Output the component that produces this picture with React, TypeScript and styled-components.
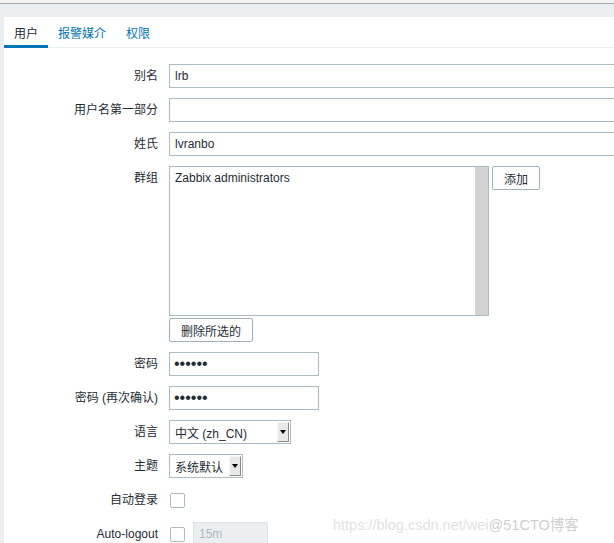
import * as React from 'react';
import styled, { createGlobalStyle } from 'styled-components';

const palette = {
  text: '#1f2c33',
  blue: '#0275b8',
  border: '#acbbc2',
  page: '#ebeef0',
  muted: '#acbbc2',
};

const GlobalStyle = createGlobalStyle`
  html, body {
    margin: 0;
    padding: 0;
    background: ${palette.page};
    overflow: hidden;
  }
  body {
    font-family: "Liberation Sans", Arial, "Noto Sans CJK SC", sans-serif;
    font-size: 12px;
    color: ${palette.text};
  }
`;

const Chrome = styled.div`
  height: 3px;
  background: #f3f3f3;
  border-bottom: 1px solid #a9a9a9;
`;

const Main = styled.div`
  padding: 13px 0 0 4px;
`;

const Panel = styled.div`
  background: #fff;
  height: 526px;
  overflow: hidden;
`;

const TabBar = styled.div`
  display: flex;
  height: 31px;
  border-bottom: 1px solid ${palette.page};
  box-sizing: border-box;
`;

const Tab = styled.div<{ $active?: boolean }>`
  padding: 0 10px;
  display: flex;
  align-items: center;
  height: 31px;
  box-sizing: border-box;
  border-bottom: 3px solid ${(p) => (p.$active ? palette.blue : 'transparent')};
  padding-top: 2px;
  color: ${(p) => (p.$active ? palette.text : palette.blue)};
`;

const Form = styled.div`
  display: grid;
  grid-template-columns: 154px 1fr;
  column-gap: 11px;
  row-gap: 10px;
  padding-top: 16px;
`;

const Label = styled.div`
  text-align: right;
  height: 24px;
  line-height: 24px;
  white-space: nowrap;
`;

const Field = styled.div`
  display: flex;
  align-items: center;
  gap: 8px;
  min-height: 24px;
`;

const FieldStack = styled.div`
  display: flex;
  flex-direction: column;
  align-items: flex-start;
  gap: 2px;
`;

const TextInput = styled.input<{ $width: number }>`
  width: ${(p) => p.$width}px;
  height: 24px;
  box-sizing: border-box;
  border: 1px solid ${palette.border};
  padding: 0 5px;
  font: inherit;
  color: ${palette.text};
  background: #fff;
  outline: none;
  flex-shrink: 0;
  &[type='password'] {
    font-size: 16px;
    padding-left: 4px;
  }
  &:disabled {
    background: ${palette.page};
    border-color: #dde3e6;
    color: ${palette.muted};
  }
`;

const ListRow = styled.div`
  display: flex;
  align-items: flex-start;
  gap: 3px;
`;

const ListBox = styled.div`
  width: 320px;
  height: 150px;
  box-sizing: border-box;
  border: 1px solid ${palette.border};
  display: flex;
`;

const ListItems = styled.div`
  flex: 1;
  padding: 4px 5px;
  line-height: 14px;
`;

const ScrollTrack = styled.div`
  width: 13px;
  background: #d3d3d3;
`;

const Button = styled.button`
  height: 24px;
  box-sizing: border-box;
  padding: 0 11px;
  border: 1px solid #9fb0b8;
  border-radius: 2px;
  background: #fff;
  font: inherit;
  color: ${palette.text};
`;

const Select = styled.div<{ $width: number }>`
  width: ${(p) => p.$width}px;
  height: 24px;
  box-sizing: border-box;
  border: 1px solid ${palette.border};
  display: flex;
  align-items: stretch;
  padding: 1px 1px 1px 5px;
`;

const SelectValue = styled.div`
  flex: 1;
  display: flex;
  align-items: center;
  white-space: nowrap;
`;

const SelectArrow = styled.div`
  width: 10px;
  background: #e8e8e8;
  border-left: 1px solid #f8f8f8;
  border-top: 1px solid #f8f8f8;
  border-right: 1px solid #8a8a8a;
  border-bottom: 1px solid #8a8a8a;
  display: flex;
  align-items: center;
  justify-content: center;
  &::after {
    content: '';
    border-left: 3px solid transparent;
    border-right: 3px solid transparent;
    border-top: 4px solid #000;
  }
`;

const Checkbox = styled.div`
  width: 15px;
  height: 15px;
  box-sizing: border-box;
  border: 1px solid ${palette.border};
  border-radius: 2px;
  margin-left: 1px;
  background: #fff;
  flex-shrink: 0;
`;

const Watermark = styled.div`
  position: absolute;
  left: 333px;
  top: 513px;
  font-size: 14.5px;
  color: #e2e2e2;
  white-space: nowrap;
  span {
    color: #cfcfcf;
  }
`;

const App: React.FC = () => {
  return (
    <>
      <GlobalStyle />
      <Chrome />
      <Main>
        <Panel>
          <TabBar>
            <Tab $active>用户</Tab>
            <Tab>报警媒介</Tab>
            <Tab>权限</Tab>
          </TabBar>
          <Form>
            <Label>别名</Label>
            <Field>
              <TextInput $width={453} defaultValue="lrb" readOnly />
            </Field>

            <Label>用户名第一部分</Label>
            <Field>
              <TextInput $width={453} defaultValue="" readOnly />
            </Field>

            <Label>姓氏</Label>
            <Field>
              <TextInput $width={453} defaultValue="lvranbo" readOnly />
            </Field>

            <Label>群组</Label>
            <FieldStack>
              <ListRow>
                <ListBox>
                  <ListItems>Zabbix administrators</ListItems>
                  <ScrollTrack />
                </ListBox>
                <Button>添加</Button>
              </ListRow>
              <Button>删除所选的</Button>
            </FieldStack>

            <Label>密码</Label>
            <Field>
              <TextInput $width={150} type="password" defaultValue="123456" readOnly />
            </Field>

            <Label>密码 (再次确认)</Label>
            <Field>
              <TextInput $width={150} type="password" defaultValue="123456" readOnly />
            </Field>

            <Label>语言</Label>
            <Field>
              <Select $width={122}>
                <SelectValue>中文 (zh_CN)</SelectValue>
                <SelectArrow />
              </Select>
            </Field>

            <Label>主题</Label>
            <Field>
              <Select $width={74}>
                <SelectValue>系统默认</SelectValue>
                <SelectArrow />
              </Select>
            </Field>

            <Label>自动登录</Label>
            <Field>
              <Checkbox />
            </Field>

            <Label>Auto-logout</Label>
            <Field>
              <Checkbox />
              <TextInput $width={75} defaultValue="15m" disabled />
            </Field>
          </Form>
        </Panel>
      </Main>
      <Watermark>
        https://blog.csdn.net/wei<span>@51CTO博客</span>
      </Watermark>
    </>
  );
};

export default App;
